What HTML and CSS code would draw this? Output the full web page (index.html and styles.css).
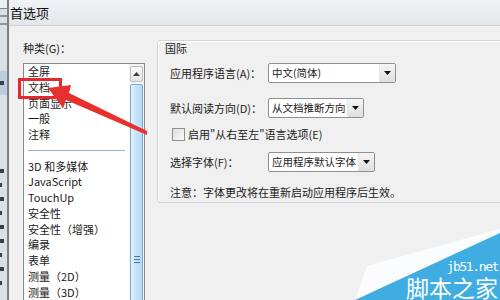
FILE: index.html
```html
<!DOCTYPE html>
<html lang="zh-CN">
<head>
    <meta charset="UTF-8">
    <title>首选项</title>
    <link rel="stylesheet" href="styles.css">
</head>
<body>
    <div class="screen">
        <div class="behind">
            <div class="behind-top"></div>
            <div class="behind-stripe"></div>
            <div class="behind-stripe"></div>
            <div class="behind-sel"><span class="mark"></span></div>
            <div class="behind-marks">
                <span class="mark"></span><span class="mark short"></span><span class="mark"></span>
                <span class="mark short"></span><span class="mark"></span><span class="mark"></span>
                <span class="mark short"></span><span class="mark"></span><span class="mark short"></span>
            </div>
        </div>

        <div class="window">
            <div class="titlebar">首选项</div>
            <div class="client">
                <div class="sidebar">
                    <div class="side-label">种类(G)：</div>
                    <div class="listbox">
                        <ul class="items">
                            <li>全屏</li>
                            <li>文档</li>
                            <li>页面显示</li>
                            <li>一般</li>
                            <li>注释</li>
                            <li class="sep"></li>
                            <li>3D 和多媒体</li>
                            <li>JavaScript</li>
                            <li>TouchUp</li>
                            <li>安全性</li>
                            <li>安全性（增强）</li>
                            <li>编录</li>
                            <li>表单</li>
                            <li>测量（2D）</li>
                            <li>测量（3D）</li>
                        </ul>
                        <div class="scrollbar">
                            <div class="sb-up">
                                <svg width="7" height="4" viewBox="0 0 7 4"><path d="M0 4 L3.5 0 L7 4 Z" fill="#3c3c3c"/></svg>
                            </div>
                            <div class="sb-thumb"><span class="grip"></span></div>
                        </div>
                    </div>
                </div>

                <div class="group">
                    <div class="group-title">国际</div>
                    <div class="row row-lang">
                        <span class="lbl">应用程序语言(A)：</span>
                        <div class="combo combo-lang">
                            <span class="combo-text">中文(简体)</span>
                            <span class="combo-btn"><svg width="7" height="4" viewBox="0 0 7 4"><path d="M0 0 L7 0 L3.5 4 Z" fill="#111"/></svg></span>
                        </div>
                    </div>
                    <div class="row row-dir">
                        <span class="lbl">默认阅读方向(D)：</span>
                        <div class="combo combo-dir">
                            <span class="combo-text">从文档推断方向</span>
                            <span class="combo-btn"><svg width="7" height="4" viewBox="0 0 7 4"><path d="M0 0 L7 0 L3.5 4 Z" fill="#111"/></svg></span>
                        </div>
                    </div>
                    <div class="row row-check">
                        <span class="checkbox"></span>
                        <span class="check-lbl">启用"从右至左"语言选项(E)</span>
                    </div>
                    <div class="row row-font">
                        <span class="lbl">选择字体(F)：</span>
                        <div class="combo combo-font">
                            <span class="combo-text">应用程序默认字体</span>
                            <span class="combo-btn"><svg width="7" height="4" viewBox="0 0 7 4"><path d="M0 0 L7 0 L3.5 4 Z" fill="#111"/></svg></span>
                        </div>
                    </div>
                    <div class="row row-note">注意：字体更改将在重新启动应用程序后生效。</div>
                </div>
            </div>
        </div>

        <svg class="overlay" width="500" height="300" viewBox="0 0 500 300">
            <!-- red highlight + arrow -->
            <rect x="19.5" y="79.5" width="41" height="18" fill="none" stroke="#e5282b" stroke-width="3"/>
            <polygon points="48,88 71,85 69,93 147,131 147,135 66,100 63,108" fill="#e8312f"/>
            <!-- watermark wedge -->
            <polygon points="367,266 500,229 500,233 355,300" fill="#fbfcfd"/>
            <polygon points="355,300 500,233 500,300" fill="#3fade2"/>
        </svg>

        <div class="watermark">
            <div class="wm-url">jb51.net</div>
            <div class="wm-name">脚本之家</div>
        </div>
    </div>
</body>
</html>
```

FILE: styles.css
```css
body {
    margin: 0;
    font-family: "Noto Sans CJK SC", "Noto Sans", sans-serif;
    font-size: 11px;
    color: #1b1b1b;
}
.screen {
    position: relative;
    width: 500px;
    height: 300px;
    overflow: hidden;
    display: flex;
    background: #f0f0f0;
}

/* window behind the dialog */
.behind {
    width: 7px;
    flex-shrink: 0;
    background: #dde0e3;
    display: flex;
    flex-direction: column;
    overflow: hidden;
}
.behind-top {
    height: 8px;
    background: #eceef0;
    border-bottom: 1px solid #7d8590;
}
.behind-stripe {
    height: 2px;
    margin-top: 6px;
    background: #8e959e;
}
.behind-sel {
    margin-top: 46px;
    height: 24px;
    background: #bccde1;
    display: flex;
    align-items: center;
}
.behind-marks {
    margin-top: 74px;
    display: flex;
    flex-direction: column;
    gap: 10px;
}
.mark {
    display: block;
    width: 4px;
    height: 4px;
    background: #3a3f48;
}
.mark.short {
    width: 2px;
}

/* dialog */
.window {
    flex: 1;
    min-width: 0;
    border-left: 2px solid #7b8087;
    display: flex;
    flex-direction: column;
}
.titlebar {
    height: 25px;
    line-height: 26px;
    padding-left: 1px;
    font-size: 13px;
    color: #111;
    background: linear-gradient(#f1f3f5, #e3e6ea);
}
.client {
    flex: 1;
    display: flex;
    align-items: flex-start;
    background: #f0f0f0;
    border-top: 1px solid #cfd3d8;
}

.sidebar {
    margin-left: 14px;
    display: flex;
    flex-direction: column;
}
.side-label {
    margin-top: 15px;
    line-height: 14px;
}
.listbox {
    margin-top: 8px;
    width: 120px;
    height: 380px;
    border: 1px solid #828790;
    background: #fff;
    display: flex;
}
.items {
    list-style: none;
    margin: 0;
    padding: 0 0 0 4px;
    flex: 1;
}
.items li {
    height: 15.75px;
    line-height: 15.75px;
    white-space: nowrap;
}
.items li.sep {
    display: flex;
    align-items: center;
    padding-right: 4px;
}
.items li.sep::after {
    content: "";
    flex: 1;
    height: 1px;
    background: #86b6e4;
}
.scrollbar {
    width: 15px;
    padding: 2px 1px 0 1px;
    box-sizing: border-box;
    display: flex;
    flex-direction: column;
    gap: 2px;
    background: #f4f4f4;
}
.sb-up {
    height: 14px;
    border: 1px solid #b9bcc1;
    border-radius: 2px;
    background: linear-gradient(#fafafa, #e3e4e6);
    display: flex;
    align-items: center;
    justify-content: center;
}
.sb-thumb {
    height: 348px;
    border: 1px solid #78aad4;
    border-radius: 2px;
    background: linear-gradient(90deg, #e3f2fc, #c4e2f7 50%, #b6daf4);
    display: flex;
    align-items: center;
    justify-content: center;
}
.grip {
    width: 6px;
    height: 5px;
    border-top: 1px solid #4a7aa3;
    border-bottom: 1px solid #4a7aa3;
    background: linear-gradient(transparent 2px, #4a7aa3 2px, #4a7aa3 3px, transparent 3px);
}

/* group box */
.group {
    margin-left: 12px;
    margin-top: 14px;
    width: 360px;
    height: 161px;
    flex-shrink: 0;
    border: 1px solid #d3d6d9;
    border-radius: 3px;
    box-shadow: inset 1px 1px 0 #fff;
    padding-left: 12px;
    display: flex;
    flex-direction: column;
}
.group-title {
    line-height: 14px;
    margin-left: -5px;
}
.row {
    height: 20px;
    display: flex;
    align-items: center;
}
.row-lang { margin-top: 8px; }
.row-dir { margin-top: 15px; }
.row-check { margin-top: 6px; }
.row-font { margin-top: 8px; }
.row-note { margin-top: 10px; }
.lbl {
    width: 98px;
    flex-shrink: 0;
}
.combo {
    height: 20px;
    box-sizing: border-box;
    border: 1px solid #8e8f91;
    border-radius: 2px;
    background: #fff;
    display: flex;
    align-items: stretch;
}
.combo-lang { width: 128px; }
.combo-dir { width: 96px; }
.combo-font { width: 107px; }
.combo-text {
    flex: 1;
    padding-left: 3px;
    font-size: 10.5px;
    line-height: 18px;
    white-space: nowrap;
    overflow: hidden;
}
.combo-btn {
    width: 15px;
    flex-shrink: 0;
    background: linear-gradient(#f6f6f6, #dedede);
    border-left: 1px solid #e6e6e6;
    display: flex;
    align-items: center;
    justify-content: center;
}
.checkbox {
    width: 11px;
    height: 11px;
    margin-left: 2px;
    border: 1px solid #8e8f8f;
    background: linear-gradient(135deg, #dcdcdc, #fbfbfb);
}
.check-lbl {
    margin-left: 3px;
}

/* overlays */
.overlay {
    position: absolute;
    left: 0;
    top: 0;
}
.watermark {
    position: absolute;
    right: 2px;
    bottom: 0;
    color: #fff;
    text-align: right;
}
.wm-url {
    font-family: "DejaVu Sans Mono", monospace;
    font-size: 13px;
    letter-spacing: -1.4px;
    line-height: 15px;
}
.wm-name {
    font-size: 23px;
    line-height: 26px;
}
```
